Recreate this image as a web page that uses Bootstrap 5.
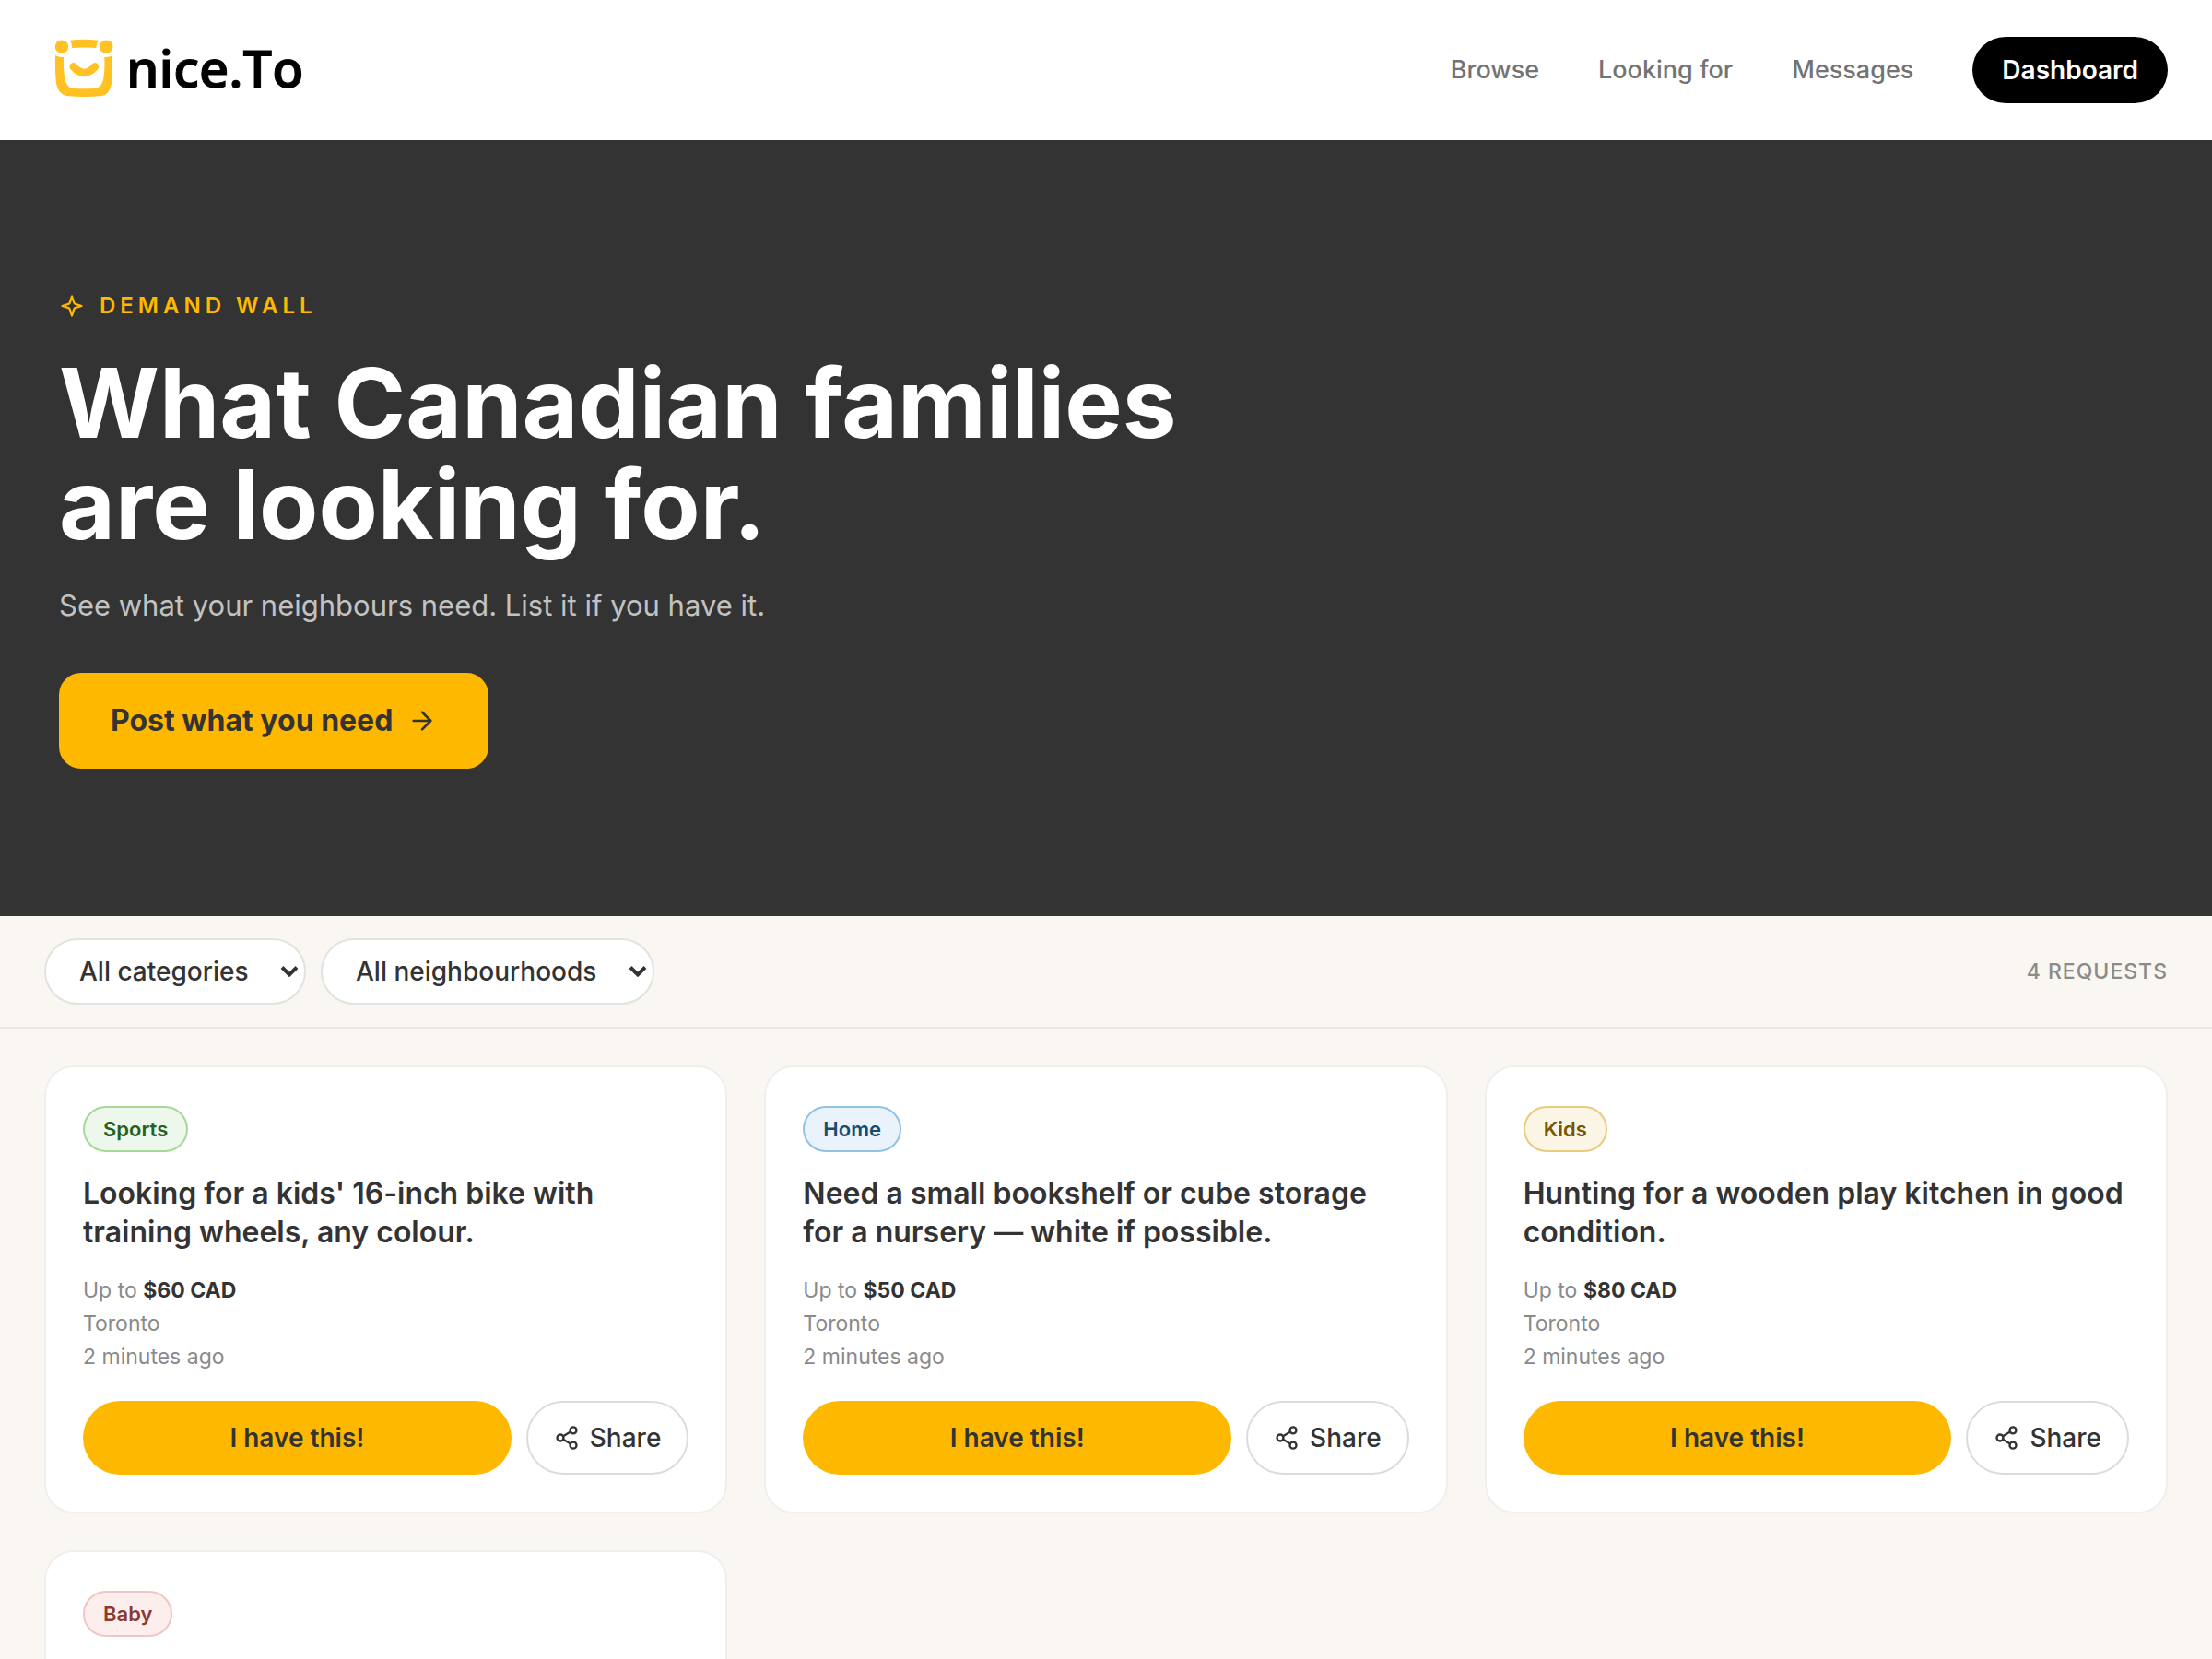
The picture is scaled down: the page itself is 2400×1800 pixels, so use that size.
<!DOCTYPE html>
<html lang="en">
<head>
<meta charset="utf-8">
<meta name="viewport" content="width=device-width, initial-scale=1">
<title>nice.To – Demand wall</title>
<link href="https://cdn.jsdelivr.net/npm/bootstrap@5.3.0/dist/css/bootstrap.min.css" rel="stylesheet">
<style>
  :root { --ink: #333; --gold: #ffb800; --cream: #faf7f2; }
  body { font-family: Inter, "Liberation Sans", sans-serif; color: var(--ink); background: var(--cream); }
  svg { flex: none; }
  .stroke-icon { fill: none; stroke: currentColor; stroke-width: 2; stroke-linecap: round; stroke-linejoin: round; }

  /* Header */
  .site-header { padding: 40px 48px; }
  .brand { gap: 14px; padding-left: 11px; color: #000; text-decoration: none; }
  .wordmark { font-family: "Open Sans", sans-serif; font-weight: 600; font-size: 56px; line-height: 66px; padding-bottom: 6px; -webkit-text-stroke: 1px #000; }
  .site-nav { gap: 64px; font-size: 27px; line-height: 32px; font-weight: 500; }
  .site-nav a { color: #737373; text-decoration: none; }
  .site-nav .btn-dash { background: #000; color: #fff; font-size: 28px; line-height: 32px; font-weight: 600; padding: 20px 32px; border: 0; }

  /* Hero */
  .hero { background: var(--ink); padding: 160px 64px; }
  .eyebrow { color: var(--gold); font-size: 24px; line-height: 40px; font-weight: 600; letter-spacing: 5px; gap: 16px; margin-bottom: 30px; }
  .hero h1 { font-size: 105px; line-height: 110px; font-weight: 700; margin-bottom: 30px; }
  .hero-copy { color: #c2c2c2; font-size: 31px; line-height: 50px; margin-bottom: 48px; }
  .btn-post { background: var(--gold); color: var(--ink); font-size: 32px; line-height: 48px; font-weight: 700; padding: 28px 56px; border: 0; border-radius: 24px; gap: 16px; }

  /* Filters */
  .filters { padding: 24px 48px; border-bottom: 2px solid #ebe8e3; }
  .filters .form-select {
    width: auto; height: 72px; padding: 0 60px 0 36px; border: 2px solid #e2e2e2;
    font-size: 28px; font-weight: 500; line-height: 32px; color: var(--ink);
    background: #fff url("data:image/svg+xml,%3Csvg xmlns='http://www.w3.org/2000/svg' viewBox='0 0 20 14'%3E%3Cpath d='M2 2.500l8 8 8-8' fill='none' stroke='%23333' stroke-width='4'/%3E%3C/svg%3E") no-repeat right 6px center / 20px 14px;
  }
  .request-count { color: #8c8b88; font-size: 23px; line-height: 32px; font-weight: 500; letter-spacing: 1px; }

  /* Request cards */
  .wall { padding: 40px 48px; }
  .wall .row { --bs-gutter-x: 40px; --bs-gutter-y: 40px; }
  .request { border: 2px solid #efefef; border-radius: 32px; background: #fff; padding: 42px 40px 40px; min-height: 486px; }
  .tag { border: 2px solid; font-size: 22px; line-height: 30px; font-weight: 600; padding: 8px 20px; margin-bottom: 24px; }
  .tag-sports { color: #27601c; background: #eef7eb; border-color: #a5d998; }
  .tag-home { color: #1a4b6e; background: #eaf3fb; border-color: #90c2e3; }
  .tag-kids { color: #7a5500; background: #fbf5e6; border-color: #e8cb7c; }
  .tag-baby { color: #8b3a2f; background: #fdeeee; border-color: #f0c5c5; }
  .request h2 { font-size: 32px; line-height: 42px; font-weight: 600; margin-bottom: 24px; }
  .facts { color: #8a8a8a; font-size: 23px; line-height: 36px; margin-bottom: 30px; }
  .facts strong { color: var(--ink); font-weight: 700; }
  .request .btn { height: 80px; font-size: 28px; line-height: 32px; font-weight: 600; color: var(--ink); }
  .request .btn-have { background: var(--gold); border: 0; }
  .request .btn-share { background: #fff; border: 2px solid #dcdcdc; padding: 0 28px; gap: 11px; font-weight: 500; }
</style>
<script src="https://cdn.jsdelivr.net/npm/bootstrap@5.3.0/dist/js/bootstrap.bundle.min.js"></script>
</head>
<body>
<svg class="d-none" aria-hidden="true">
  <symbol id="i-share" viewBox="0 0 24 24"><circle cx="18" cy="5" r="3"/><circle cx="6" cy="12" r="3"/><circle cx="18" cy="19" r="3"/><path d="M8.600 13.500l6.800 4M15.400 6.500l-6.800 4"/></symbol>
</svg>

<header class="site-header bg-white d-flex align-items-center justify-content-between">
  <a href="#" class="brand d-flex align-items-center">
    <svg width="64" height="72" viewBox="59 40 64 72" aria-hidden="true">
      <g fill="#ffc222">
        <circle cx="67" cy="50.700" r="7.200"/><circle cx="115.300" cy="50.700" r="7.200"/>
        <path d="M75.500 43.800Q91 41.600 107 43.800Q104.300 47 104.300 52Q91 50.800 78 52Q78.300 47 75.500 43.800Z"/>
        <path d="M60 60Q64.500 62.300 69 61.800Q68.500 76 70.500 86.500Q72.500 94.500 78.500 95.700Q91 96.800 104 95.700Q110 94.500 112 86.500Q114 76 113.300 61.800Q118 62.300 122 60Q122.300 80 121 91Q119 102.500 110.500 104Q91 105.800 72.500 104Q63.500 102.500 61 91Q59.700 80 60 60Z"/>
      </g>
      <path d="M79.700 72.300Q91 85.500 103 72.300" fill="none" stroke="#ffc222" stroke-width="8.500" stroke-linecap="round"/>
    </svg>
    <span class="wordmark">nice.To</span>
  </a>
  <nav class="site-nav d-flex align-items-center">
    <a href="#">Browse</a>
    <a href="#">Looking for</a>
    <a href="#">Messages</a>
    <a href="#" class="btn btn-dash rounded-pill">Dashboard</a>
  </nav>
</header>

<main>
  <section class="hero text-white">
    <div class="eyebrow d-flex align-items-center">
      <svg class="stroke-icon" width="28" height="28" viewBox="0 0 24 24"><path d="M12 3l-1.900 5.800a2 2 0 0 1-1.300 1.300L3 12l5.800 1.900a2 2 0 0 1 1.300 1.300L12 21l1.900-5.800a2 2 0 0 1 1.300-1.300L21 12l-5.800-1.900a2 2 0 0 1-1.300-1.300Z"/></svg>
      <span>DEMAND WALL</span>
    </div>
    <h1>What Canadian families<br>are looking for.</h1>
    <p class="hero-copy">See what your neighbours need. List it if you have it.</p>
    <button type="button" class="btn btn-post d-flex align-items-center">Post what you need
      <svg class="stroke-icon" width="32" height="32" viewBox="0 0 24 24"><path d="M5 12h14M12 5l7 7-7 7"/></svg>
    </button>
  </section>

  <section class="filters d-flex align-items-center justify-content-between">
    <div class="d-flex gap-3">
      <select class="form-select rounded-pill" aria-label="Category"><option>All categories</option></select>
      <select class="form-select rounded-pill" aria-label="Neighbourhood"><option>All neighbourhoods</option></select>
    </div>
    <div class="request-count">4 REQUESTS</div>
  </section>

  <section class="wall">
    <div class="row row-cols-3">
      <div class="col">
        <article class="request">
          <span class="tag tag-sports rounded-pill d-inline-block">Sports</span>
          <h2>Looking for a kids' 16-inch bike with training wheels, any colour.</h2>
          <div class="facts">
            <div>Up to <strong>$60 CAD</strong></div>
            <div>Toronto</div>
            <div>2 minutes ago</div>
          </div>
          <div class="d-flex gap-3">
            <button type="button" class="btn btn-have rounded-pill flex-grow-1">I have this!</button>
            <button type="button" class="btn btn-share rounded-pill d-flex align-items-center"><svg class="stroke-icon" width="28" height="28"><use href="#i-share"/></svg>Share</button>
          </div>
        </article>
      </div>
      <div class="col">
        <article class="request">
          <span class="tag tag-home rounded-pill d-inline-block">Home</span>
          <h2>Need a small bookshelf or cube storage for a nursery — white if possible.</h2>
          <div class="facts">
            <div>Up to <strong>$50 CAD</strong></div>
            <div>Toronto</div>
            <div>2 minutes ago</div>
          </div>
          <div class="d-flex gap-3">
            <button type="button" class="btn btn-have rounded-pill flex-grow-1">I have this!</button>
            <button type="button" class="btn btn-share rounded-pill d-flex align-items-center"><svg class="stroke-icon" width="28" height="28"><use href="#i-share"/></svg>Share</button>
          </div>
        </article>
      </div>
      <div class="col">
        <article class="request">
          <span class="tag tag-kids rounded-pill d-inline-block">Kids</span>
          <h2>Hunting for a wooden play kitchen in good condition.</h2>
          <div class="facts">
            <div>Up to <strong>$80 CAD</strong></div>
            <div>Toronto</div>
            <div>2 minutes ago</div>
          </div>
          <div class="d-flex gap-3">
            <button type="button" class="btn btn-have rounded-pill flex-grow-1">I have this!</button>
            <button type="button" class="btn btn-share rounded-pill d-flex align-items-center"><svg class="stroke-icon" width="28" height="28"><use href="#i-share"/></svg>Share</button>
          </div>
        </article>
      </div>
      <div class="col">
        <article class="request">
          <span class="tag tag-baby rounded-pill d-inline-block">Baby</span>
        </article>
      </div>
    </div>
  </section>
</main>
</body>
</html>
